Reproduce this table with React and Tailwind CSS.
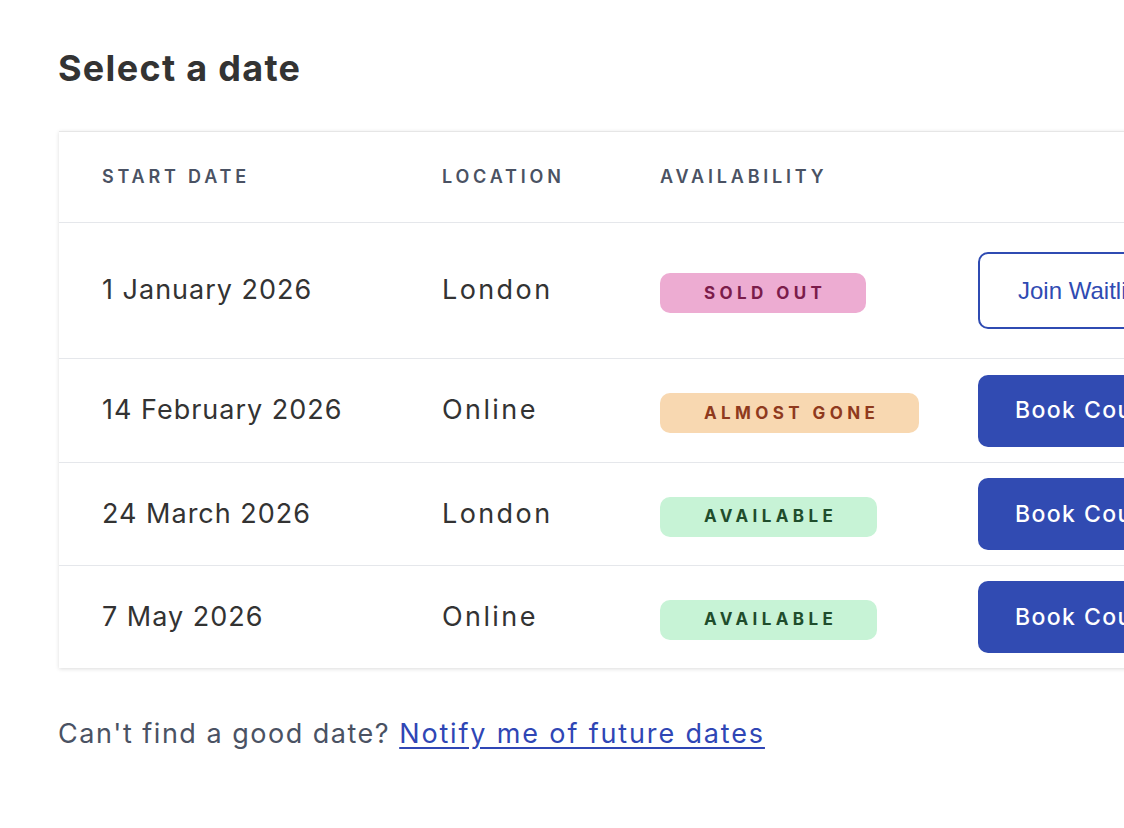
import React from 'react';

const rows = [
  { date: '1 January 2026', location: 'London', status: 'soldout', h: 'h-[136px]' },
  { date: '14 February 2026', location: 'Online', status: 'almost', h: 'h-[104px]' },
  { date: '24 March 2026', location: 'London', status: 'available', h: 'h-[103px]' },
  { date: '7 May 2026', location: 'Online', status: 'available', h: 'h-[102px]' },
];

const Badge = ({ status }) => {
  if (status === 'soldout') {
    return (
      <span className="inline-flex h-[40px] items-center rounded-[10px] bg-[#edacd2] pl-[44px] pr-[40px] text-[17px] font-bold tracking-[4.4px] text-[#7b1c4b]">
        SOLD OUT
      </span>
    );
  }
  if (status === 'almost') {
    return (
      <span className="inline-flex h-[40px] items-center rounded-[10px] bg-[#f8d8b1] pl-[44px] pr-[40px] text-[17px] font-bold tracking-[4.4px] text-[#8f3a1d]">
        ALMOST GONE
      </span>
    );
  }
  return (
    <span className="inline-flex h-[40px] items-center rounded-[10px] bg-[#c7f3d6] pl-[44px] pr-[40px] text-[17px] font-bold tracking-[4.4px] text-[#1f4d2c]">
      AVAILABLE
    </span>
  );
};

const App = () => {
  return (
    <div className="w-full min-h-[828px] overflow-hidden bg-white font-['Inter','Noto_Sans',sans-serif]">
      <div className="w-[1300px] pl-[58px] pt-[44px]">
        <h1 className="text-[36px] font-bold leading-[48px] tracking-[1.3px] text-[#333333]">Select a date</h1>

        {/* Dates table */}
        <div className="mt-[39px] ml-px border-t border-[#e6e6e6] bg-white shadow-[0_1px_4px_rgba(0,0,0,0.14)]">
          <div className="grid h-[91px] grid-cols-[340px_218px_318px_1fr] items-center border-b border-[#e5e7eb] pb-[2px] pl-[43px] text-[18px] font-semibold tracking-[3.8px] text-[#4a5263]">
            <span>START DATE</span>
            <span>LOCATION</span>
            <span>AVAILABILITY</span>
            <span></span>
          </div>
          {rows.map((row, i) => (
            <div
              key={row.date}
              className={`grid grid-cols-[340px_218px_318px_1fr] items-center pl-[43px] text-[27px] text-[#333333] ${row.h} ${
                i < rows.length - 1 ? 'border-b border-[#e5e7eb]' : ''
              }`}
            >
              <span className="tracking-[1px]">{row.date}</span>
              <span className="tracking-[2.4px]">{row.location}</span>
              <div className="pt-[2px]">
                <Badge status={row.status} />
              </div>
              <div>
                {row.status === 'soldout' ? (
                  <button className="h-[77px] w-[240px] rounded-[10px] border-2 border-[#2f4bb2] bg-white pl-[38px] text-left font-['Liberation_Sans',Arial,sans-serif] text-[24px] text-[#2f4bb2]">
                    Join Waitlist
                  </button>
                ) : (
                  <button className="h-[72px] w-[240px] rounded-[10px] bg-[#314bb2] pl-[37px] text-left text-[23px] font-medium tracking-[1.4px] text-white">
                    Book Course
                  </button>
                )}
              </div>
            </div>
          ))}
        </div>

        <p className="mt-[46px] text-[27px] tracking-[1.5px] text-[#4a5263]">
          Can't find a good date?{' '}
          <a href="#" className="tracking-[1.85px] text-[#2f46b5] underline underline-offset-[4px]">
            Notify me of future dates
          </a>
        </p>
      </div>
    </div>
  );
};

export default App;
